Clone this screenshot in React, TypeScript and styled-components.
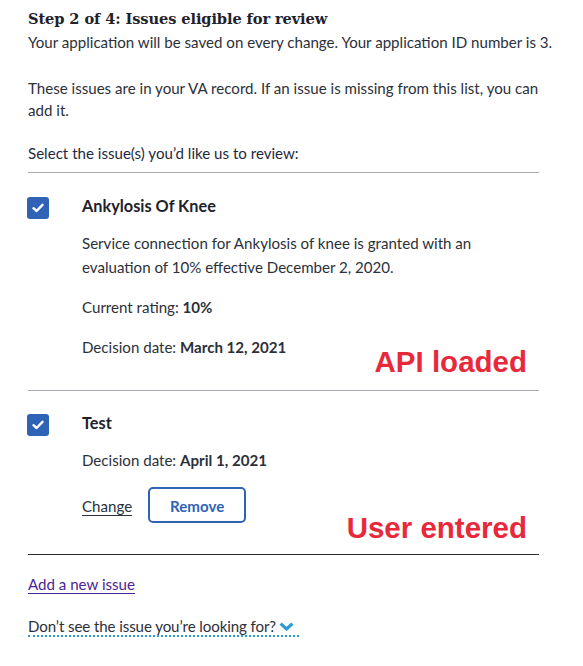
import React from "react";
import styled, { createGlobalStyle } from "styled-components";

const Global = createGlobalStyle`
  html, body { margin: 0; padding: 0; background: #ffffff; }
  body { font-family: Lato, "Noto Sans", sans-serif; color: #2c3039; }
  * { box-sizing: border-box; }
`;

const Page = styled.main`
  width: 583px;
  padding: 0 0 0 28px;
  font-size: 15.1px;
`;

const Heading = styled.h2`
  margin: 0;
  padding-top: 7px;
  font-family: "DejaVu Serif", "Liberation Serif", serif;
  font-weight: 700;
  font-size: 14.6px;
  line-height: 24px;
  letter-spacing: -0.1px;
  color: #1e222b;
`;

const Text = styled.p<{ $mt?: number; $max?: number }>`
  margin: ${(p) => p.$mt ?? 0}px 0 0;
  line-height: 22px;
  max-width: ${(p) => (p.$max ? `${p.$max}px` : "none")};
`;

const Prompt = styled.p`
  margin: 21px 0 0;
  line-height: 22px;
  color: #1f2940;
`;

const IssueList = styled.ul`
  list-style: none;
  width: 511px;
  margin: 8px 0 0;
  padding: 0;
  border-top: 1px solid #a9abb0;
`;

const Issue = styled.li<{ $last?: boolean }>`
  position: relative;
  display: grid;
  grid-template-columns: 54px 1fr;
  padding: ${(p) => (p.$last ? 20 : 21)}px 0 31px;
  border-bottom: 1px solid ${(p) => (p.$last ? "#2b2d33" : "#a9abb0")};
`;

const Box = styled.span`
  margin-top: 3px;
  margin-left: -1px;
  width: 22px;
  height: 22px;
  border-radius: 3px;
  background: #2e63b6;
  display: flex;
  align-items: center;
  justify-content: center;
`;

const Body = styled.div`
  display: flex;
  flex-direction: column;
  align-items: flex-start;
`;

const Title = styled.span`
  font-weight: 700;
  font-size: 16.3px;
  line-height: 24px;
  color: #1e222b;
`;

const Line = styled.p<{ $mt: number }>`
  margin: ${(p) => p.$mt}px 0 0;
  line-height: 24px;
  max-width: 420px;
`;

const Actions = styled.div`
  display: flex;
  align-items: baseline;
  gap: 16px;
  margin-top: 15px;
`;

const ChangeLink = styled.a`
  color: #2c3039;
  line-height: 24px;
  text-decoration: underline;
  text-underline-offset: 3px;
  text-decoration-thickness: 1px;
`;

const RemoveButton = styled.button`
  width: 98px;
  height: 36px;
  padding: 1px 0 0;
  border: 2px solid #2e63b6;
  border-radius: 5px;
  background: #fff;
  color: #2e63b6;
  font-family: inherit;
  font-weight: 700;
  font-size: 15.1px;
  line-height: 24px;
`;

const Note = styled.span<{ $bottom: number }>`
  position: absolute;
  right: 12px;
  bottom: ${(p) => p.$bottom}px;
  font-family: "Liberation Sans", Arial, sans-serif;
  font-weight: 700;
  font-size: 29.5px;
  line-height: 28px;
  color: #e8293b;
`;

const AddLink = styled.a`
  display: inline-block;
  margin-top: 17px;
  color: #4a2594;
  line-height: 24px;
  text-decoration: underline;
  text-underline-offset: 3px;
  text-decoration-thickness: 1px;
`;

const MoreInfo = styled.div`
  margin-top: 21px;
`;

const MoreButton = styled.span`
  display: inline-flex;
  align-items: center;
  gap: 3px;
  padding-right: 5px;
  line-height: 18px;
  letter-spacing: -0.1px;
  border-bottom: 2px dotted #2e9ad6;
`;

const Check = () => (
  <svg width="12" height="10" viewBox="0 0 12 10" aria-hidden>
    <path d="M1.5 5.2 L4.6 8 L10.5 1.8" stroke="#fff" strokeWidth="2.4" fill="none" strokeLinecap="round" strokeLinejoin="round" />
  </svg>
);

const Chevron = () => (
  <svg width="15" height="9" viewBox="0 0 15 9" aria-hidden>
    <path d="M1.6 1.6 L7.5 7 L13.4 1.6" stroke="#2e9ad6" strokeWidth="3.2" fill="none" strokeLinejoin="miter" />
  </svg>
);

export default function App() {
  return (
    <>
      <Global />
      <Page>
        <Heading>Step 2 of 4: Issues eligible for review</Heading>
        <Text>Your application will be saved on every change. Your application ID number is 3.</Text>
        <Text $mt={24} $max={520}>
          These issues are in your VA record. If an issue is missing from this list, you can add it.
        </Text>
        <Prompt>Select the issue(s) you’d like us to review:</Prompt>
        <IssueList>
          <Issue>
            <Box>
              <Check />
            </Box>
            <Body>
              <Title>Ankylosis Of Knee</Title>
              <Line $mt={13}>
                Service connection for Ankylosis of knee is granted with an evaluation of 10% effective December 2, 2020.
              </Line>
              <Line $mt={16}>
                Current rating: <b>10%</b>
              </Line>
              <Line $mt={16}>
                Decision date: <b>March 12, 2021</b>
              </Line>
            </Body>
            <Note $bottom={14}>API loaded</Note>
          </Issue>
          <Issue $last>
            <Box>
              <Check />
            </Box>
            <Body>
              <Title>Test</Title>
              <Line $mt={13}>
                Decision date: <b>April 1, 2021</b>
              </Line>
              <Actions>
                <ChangeLink href="#">Change</ChangeLink>
                <RemoveButton>Remove</RemoveButton>
              </Actions>
            </Body>
            <Note $bottom={12}>User entered</Note>
          </Issue>
        </IssueList>
        <AddLink href="#">Add a new issue</AddLink>
        <MoreInfo>
          <MoreButton>
            Don’t see the issue you’re looking for?
            <Chevron />
          </MoreButton>
        </MoreInfo>
      </Page>
    </>
  );
}
